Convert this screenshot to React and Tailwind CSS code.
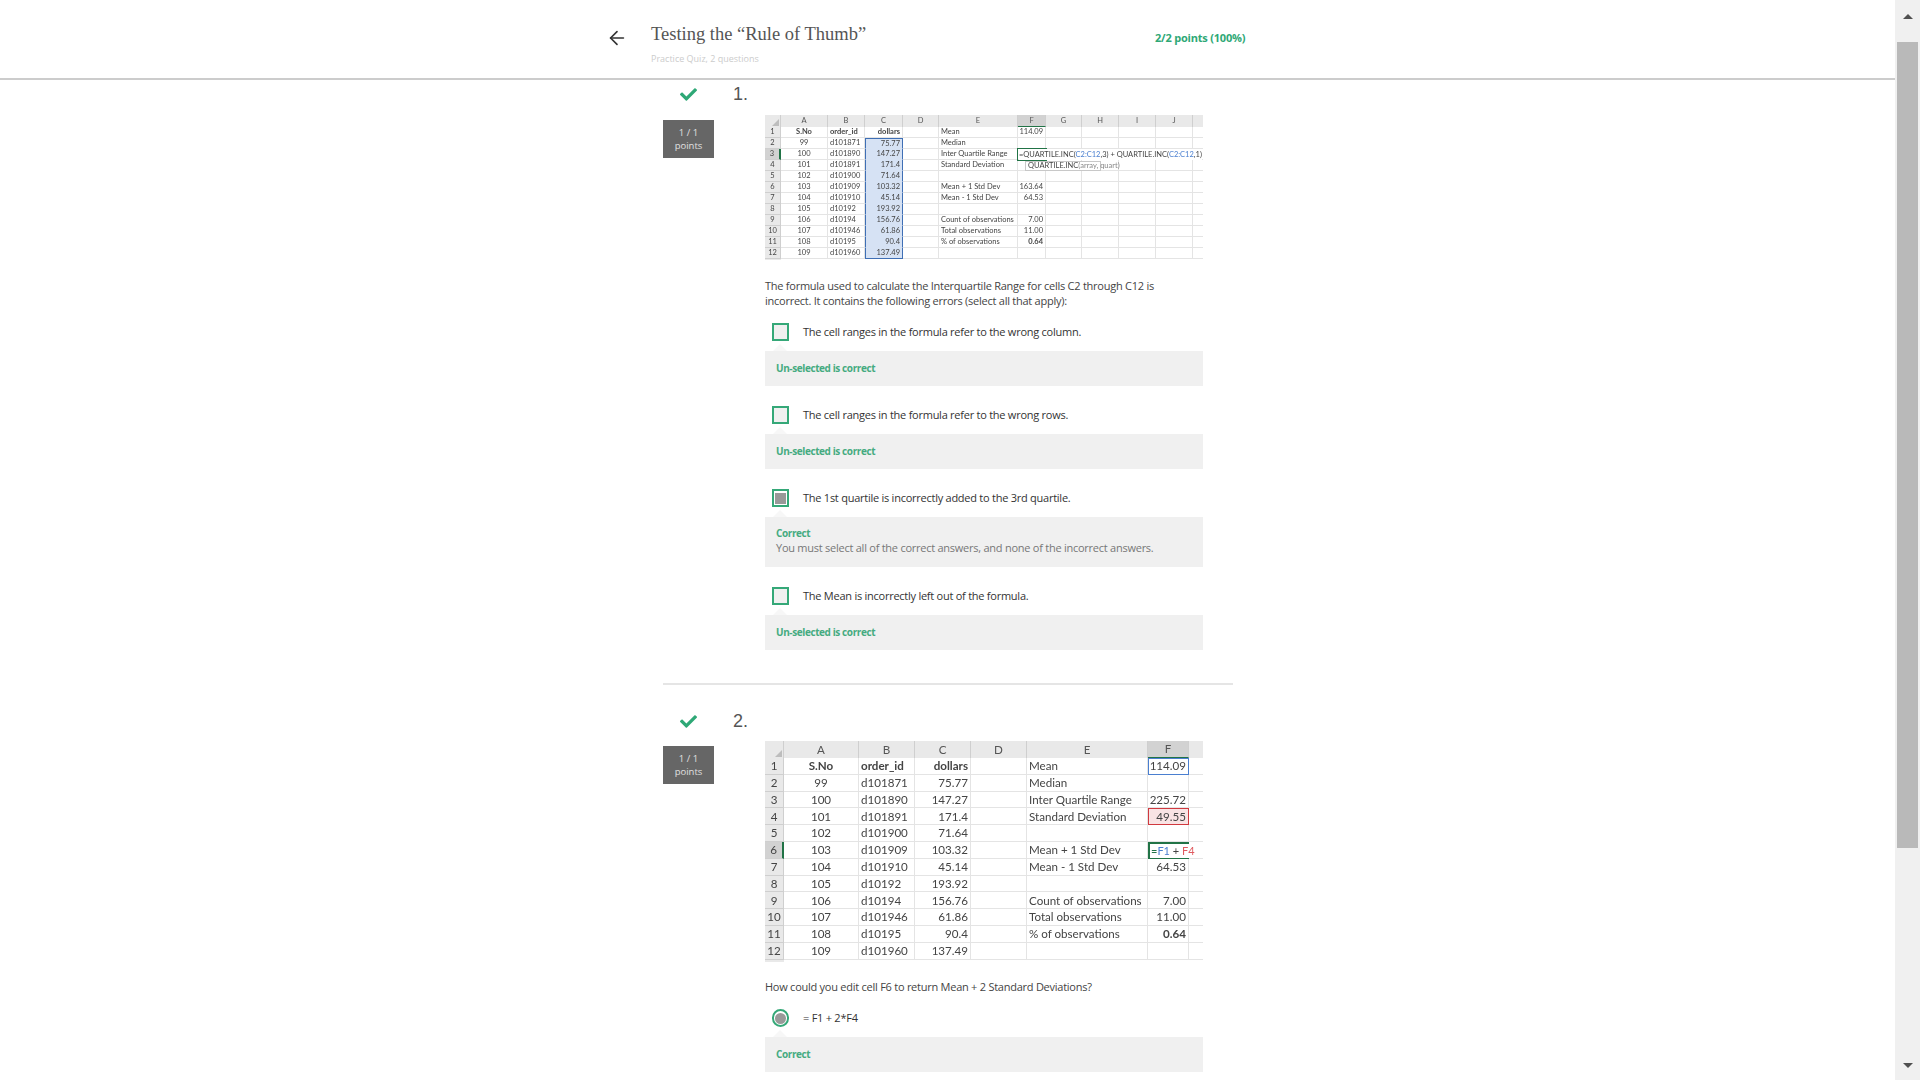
import React from 'react';
import { ArrowLeft } from 'lucide-react';
import { FaCheck } from 'react-icons/fa';

const baseRows = [
    ['S.No', 'order_id', 'dollars'],
    ['99', 'd101871', '75.77'],
    ['100', 'd101890', '147.27'],
    ['101', 'd101891', '171.4'],
    ['102', 'd101900', '71.64'],
    ['103', 'd101909', '103.32'],
    ['104', 'd101910', '45.14'],
    ['105', 'd10192', '193.92'],
    ['106', 'd10194', '156.76'],
    ['107', 'd101946', '61.86'],
    ['108', 'd10195', '90.4'],
    ['109', 'd101960', '137.49'],
];

const labels = ['Mean', 'Median', 'Inter Quartile Range', 'Standard Deviation', '', 'Mean + 1 Std Dev', 'Mean - 1 Std Dev', '', 'Count of observations', 'Total observations', '% of observations', ''];

const valuesOne = ['114.09', '', '', '', '', '163.64', '64.53', '', '7.00', '11.00', '0.64', ''];
const valuesTwo = ['114.09', '', '225.72', '49.55', '', '', '64.53', '', '7.00', '11.00', '0.64', ''];

const Head = ({ children, active, className = '' }) => (
    <div className={`flex items-center justify-center border-r border-[#cfcfcf] ${active ? 'bg-[#d2d2d2] border-b border-b-[#217346]' : 'bg-[#e9e9e9]'} text-[#555] ${className}`}>
        {children}
    </div>
);

const Cell = ({ children, align = 'left', bold, className = '' }) => (
    <div className={`relative flex items-center border-r border-b border-[#e4e4e4] px-[2px] whitespace-nowrap text-[#444] ${align === 'right' ? 'justify-end' : align === 'center' ? 'justify-center' : 'justify-start'} ${bold ? 'font-bold text-[#222]' : ''} ${className}`}>
        {children}
    </div>
);

const RowNum = ({ n, active }) => (
    <div className={`flex items-center justify-center border-r border-b border-[#cfcfcf] text-[#444] ${active ? 'bg-[#d2d2d2] border-r-2 border-r-[#217346]' : 'bg-[#e9e9e9]'}`}>{n}</div>
);

const Corner = () => (
    <div className="flex items-end justify-end bg-[#e9e9e9] border-r border-[#cfcfcf] p-[1px]">
        <div className="w-0 h-0 border-l-[7px] border-l-transparent border-b-[7px] border-b-[#bdbdbd]"></div>
    </div>
);

// small sheet, formula being typed in F3
const SheetOne = () => {
    const tail = ['G', 'H', 'I', 'J'];
    return (
        <div className="relative w-[438px] h-[145px] overflow-hidden font-['Lato',sans-serif] text-[7.5px] tracking-normal blur-[0.3px] grid grid-cols-[16px_47px_37px_38px_36px_79px_28px_36px_37px_37px_37px_10px] grid-rows-[12px_repeat(12,11px)_1px]">
            <Corner />
            {['A', 'B', 'C', 'D', 'E', 'F', 'G', 'H', 'I', 'J', ''].map((h) => (
                <Head key={h} active={h === 'F'} className={h === '' ? '!border-r-0' : ''}>{h}</Head>
            ))}
            {baseRows.map((row, i) => (
                <React.Fragment key={i}>
                    <RowNum n={i + 1} active={i === 2} />
                    <Cell align="center" bold={i === 0}>{row[0]}</Cell>
                    <Cell bold={i === 0}>{row[1]}</Cell>
                    <Cell
                        align="right"
                        bold={i === 0}
                        className={i === 0 ? '' : `bg-[#d6e2f4] border-x border-x-[#3f6fb5] ${i === 11 ? 'border-b-[#3f6fb5]' : 'border-b-[#d6e2f4]'} ${i === 1 ? 'border-t border-t-[#3f6fb5]' : ''}`}
                    >
                        {row[2]}
                    </Cell>
                    <Cell />
                    <Cell>{labels[i]}</Cell>
                    <Cell align="right" bold={i === 10} className={i === 2 ? 'outline outline-1 outline-[#217346] z-10' : ''}>
                        {i === 2 ? (
                            <span className="absolute left-[1px] top-0 whitespace-nowrap bg-white text-[#444]">
                                =QUARTILE.INC(<span className="text-[#4a7fd0]">C2:C12</span>,3) + QUARTILE.INC(<span className="text-[#4a7fd0]">C2:C12</span>,1)
                            </span>
                        ) : i === 3 ? (
                            <span className="absolute left-[7px] top-[1px] z-20 h-[10px] w-[76px] flex items-center px-[2px] bg-white border border-[#c8c8c8] whitespace-nowrap text-[#444]">
                                QUARTILE.INC<span className="text-[#888]">(array, quart)</span>
                            </span>
                        ) : valuesOne[i]}
                    </Cell>
                    {tail.map((t) => <Cell key={t} />)}
                    <Cell className="border-r-0" />
                </React.Fragment>
            ))}
            <div className="col-span-12 flex">
                <div className="w-[16px] bg-[#e9e9e9]"></div>
            </div>
        </div>
    );
};

// larger sheet, editing F6
const SheetTwo = () => (
    <div className="relative w-[438px] h-[221px] overflow-hidden font-['Lato',sans-serif] text-[11.6px] tracking-normal blur-[0.3px] grid grid-cols-[19px_75px_56px_56px_56px_121px_41px_14px] grid-rows-[17px_repeat(12,16.8px)_2px]">
        <Corner />
        {['A', 'B', 'C', 'D', 'E', 'F', ''].map((h) => (
            <Head key={h} active={h === 'F'} className={h === '' ? '!border-r-0' : ''}>{h}</Head>
        ))}
        {baseRows.map((row, i) => (
            <React.Fragment key={i}>
                <RowNum n={i + 1} active={i === 5} />
                <Cell align="center" bold={i === 0}>{row[0]}</Cell>
                <Cell bold={i === 0}>{row[1]}</Cell>
                <Cell align="right" bold={i === 0}>{row[2]}</Cell>
                <Cell />
                <Cell>{labels[i]}</Cell>
                <Cell
                    align="right"
                    bold={i === 10}
                    className={
                        i === 0 ? 'outline outline-[1.5px] -outline-offset-1 outline-[#4a7fd0] z-10' :
                            i === 3 ? 'bg-[#f9e3e4] outline outline-[1.5px] -outline-offset-1 outline-[#d0393f] z-10' :
                                i === 5 ? 'border-y-2 border-l-2 border-y-[#217346] border-l-[#217346] border-r-0 z-10 bg-white' : ''
                    }
                >
                    {i === 5 ? (
                        <span className="absolute left-[1px] whitespace-nowrap text-[#444] text-[11px]">
                            <span className="text-[#217346]">=</span><span className="text-[#4a7fd0]">F1</span> + <span className="text-[#e05a5f]">F4</span>
                        </span>
                    ) : valuesTwo[i]}
                </Cell>
                <Cell className="border-r-0" />
            </React.Fragment>
        ))}
        <div className="col-span-8 flex">
            <div className="w-[19px] bg-[#e9e9e9]"></div>
        </div>
    </div>
);

const Choice = ({ type = 'check', selected, text, title, note }) => (
    <div>
        <div className="flex items-center h-[24px] pl-[7px]">
            <div className={`w-[17px] h-[18px] border-[2.5px] border-[#35a878] flex items-center justify-center ${type === 'radio' ? 'rounded-full' : ''} ${selected ? 'bg-white' : 'bg-[#f0f0f0]'}`}>
                {selected && <div className={`w-[11px] h-[11px] bg-[#999] ${type === 'radio' ? 'rounded-full' : ''}`}></div>}
            </div>
            <span className="ml-[14px] text-[#333]">{text}</span>
        </div>
        <div className={`relative mt-[7px] bg-[#f0f0f0] px-[11px] ${note ? 'h-[50px] pt-[9px]' : 'h-[35px] pb-[2px] flex items-center'}`}>
            <div className="absolute left-[8px] -top-[7px] w-0 h-0 border-x-[7px] border-x-transparent border-b-[7px] border-b-[#f7f7f7]"></div>
            <div>
                <div className="text-[10px] leading-[14px] font-bold text-[#45ab80] tracking-[-0.4px]">{title}</div>
                {note && <div className="text-[11px] leading-[15px] text-[#777]">{note}</div>}
            </div>
        </div>
    </div>
);

const QuestionHead = ({ n }) => (
    <div className="flex items-center h-[28px]">
        <div className="w-[51px] flex justify-center">
            <FaCheck className="text-[#2ea876] text-[17px]" />
        </div>
        <span className="ml-[19px] text-[18px] tracking-normal text-[#555] font-['Liberation_Sans',sans-serif]">{n}.</span>
    </div>
);

const PointsBox = () => (
    <div className="w-[51px] h-[38px] bg-[#666] text-[#e0e0e0] text-[9.5px] tracking-normal leading-[13px] flex flex-col items-center justify-center">
        <span>1 / 1</span>
        <span>points</span>
    </div>
);

const App = () => {
    return (
        <div className="h-screen w-full overflow-hidden flex bg-white font-['Open_Sans',sans-serif] text-[11px] tracking-[-0.25px]">
            <div className="flex-1 min-w-0">
                <header className="h-[80px] border-b-2 border-[#ccc] flex">
                    <div className="ml-[606px] mt-[27px] w-[45px]">
                        <ArrowLeft size={22} strokeWidth={1.8} className="text-[#333]" />
                    </div>
                    <div className="w-[504px] pt-[22px]">
                        <div className="text-[18.5px] leading-[24px] tracking-normal text-[#555] font-['Liberation_Serif',serif]">Testing the “Rule of Thumb”</div>
                        <div className="mt-[6px] text-[9px] leading-[14px] tracking-normal text-[#ccc]">Practice Quiz, 2 questions</div>
                    </div>
                    <div className="pt-[30px] text-[11px] font-bold tracking-[-0.2px] text-[#2ea876]">2/2 points (100%)</div>
                </header>

                <main className="ml-[663px] w-[570px]">
                    <section>
                        <QuestionHead n={1} />
                        <div className="flex mt-[7px]">
                            <div className="w-[102px] pt-[5px]"><PointsBox /></div>
                            <div className="w-[438px]">
                                <SheetOne />
                                <p className="mt-[18px] w-[400px] leading-[15px] text-[#444]">
                                    The formula used to calculate the Interquartile Range for cells C2 through C12 is incorrect. It contains the following errors (select all that apply):
                                </p>
                                <div className="mt-[12px] flex flex-col gap-[17px]">
                                    <Choice text="The cell ranges in the formula refer to the wrong column." title="Un-selected is correct" />
                                    <Choice text="The cell ranges in the formula refer to the wrong rows." title="Un-selected is correct" />
                                    <Choice selected text="The 1st quartile is incorrectly added to the 3rd quartile." title="Correct" note="You must select all of the correct answers, and none of the incorrect answers." />
                                    <Choice text="The Mean is incorrectly left out of the formula." title="Un-selected is correct" />
                                </div>
                            </div>
                        </div>
                    </section>

                    <hr className="mt-[33px] mb-[22px] border-t-2 border-[#e5e5e5]" />

                    <section>
                        <QuestionHead n={2} />
                        <div className="flex mt-[6px]">
                            <div className="w-[102px] pt-[5px]"><PointsBox /></div>
                            <div className="w-[438px]">
                                <SheetTwo />
                                <p className="mt-[17px] leading-[15px] text-[#444]">How could you edit cell F6 to return Mean + 2 Standard Deviations?</p>
                                <div className="mt-[12px]">
                                    <Choice type="radio" selected text="= F1 + 2*F4" title="Correct" />
                                </div>
                            </div>
                        </div>
                    </section>
                </main>
            </div>

            <div className="w-[25px] shrink-0 bg-[#f0f0f0] flex flex-col items-center">
                <div className="h-[42px] flex items-center justify-center pb-[10px]">
                    <div className="w-0 h-0 border-x-[5px] border-x-transparent border-b-[5px] border-b-[#505050]"></div>
                </div>
                <div className="w-[21px] h-[806px] bg-[#b9b9b9]"></div>
                <div className="flex-1 flex items-end pb-[12px]">
                    <div className="w-0 h-0 border-x-[5px] border-x-transparent border-t-[5px] border-t-[#505050]"></div>
                </div>
            </div>
        </div>
    );
};

export default App;
